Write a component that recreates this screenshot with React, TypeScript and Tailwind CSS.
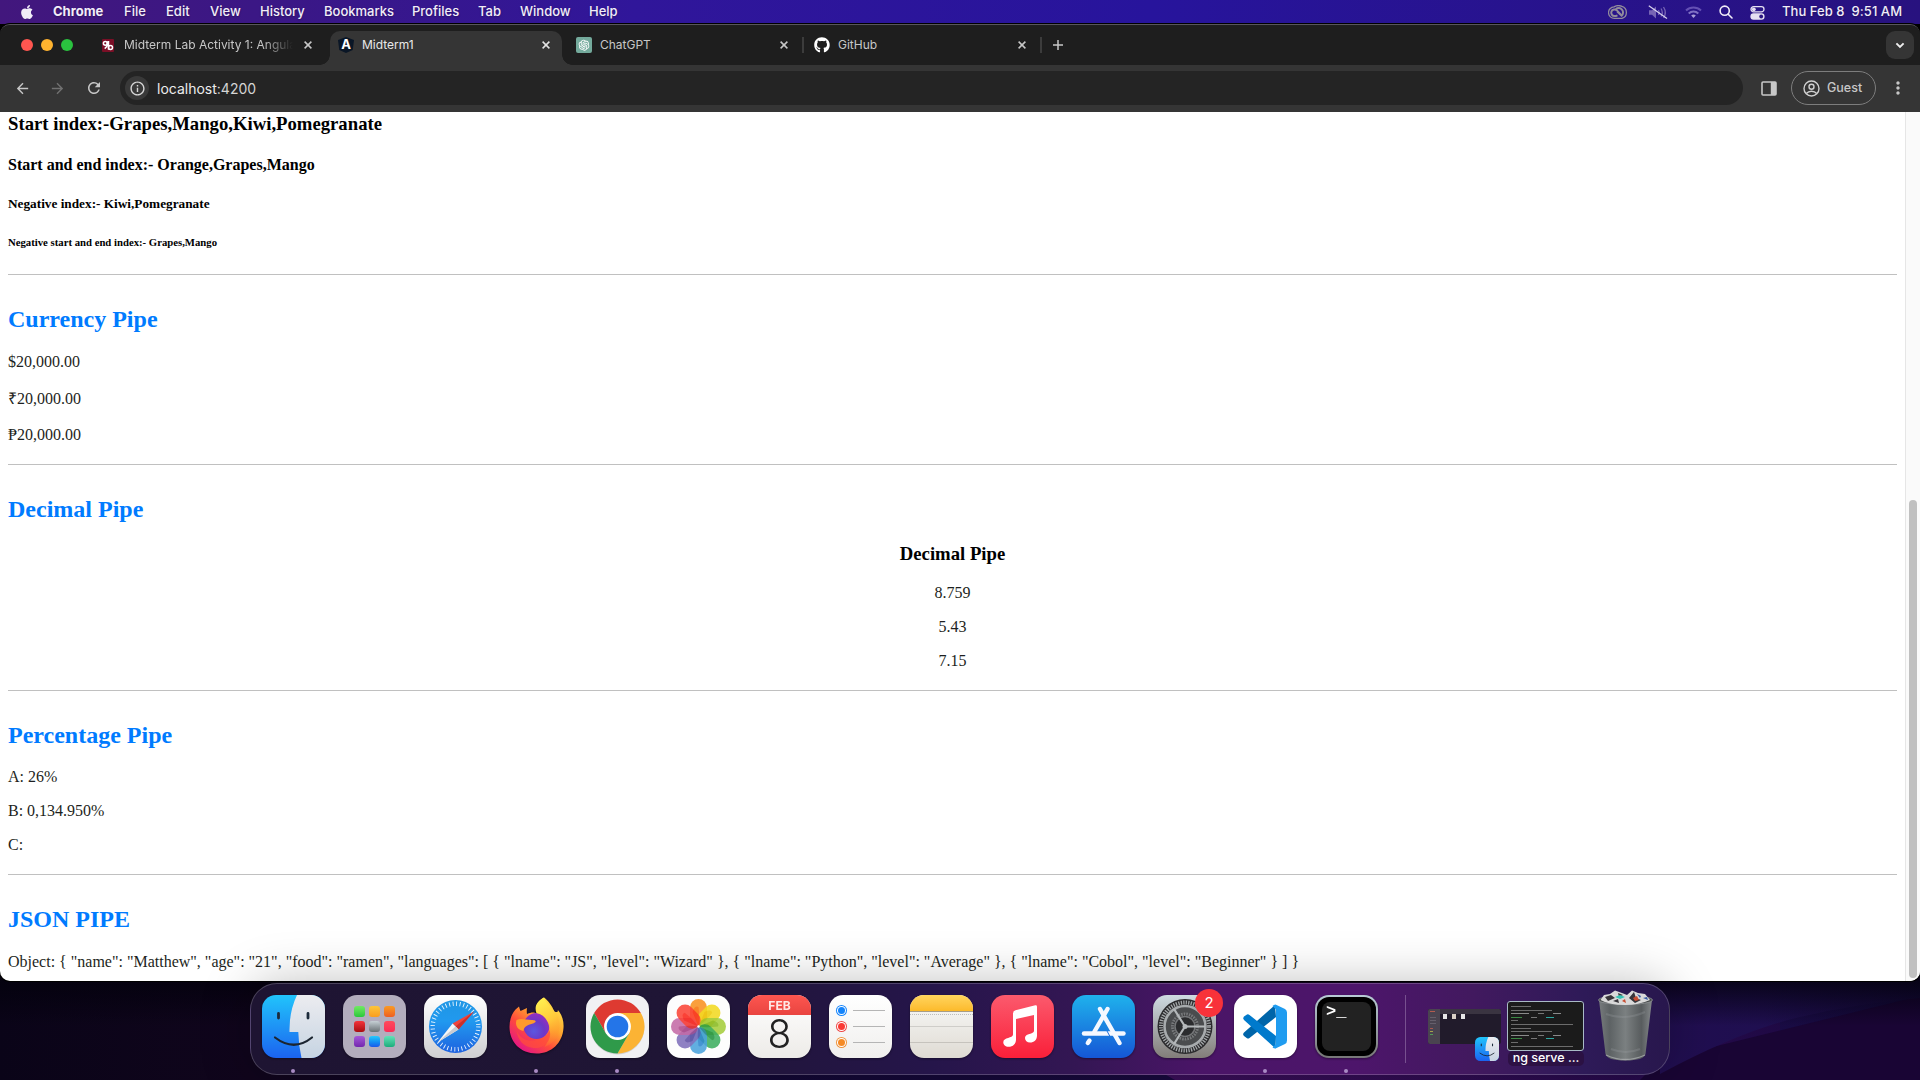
import React from "react";
import { FaApple, FaGithub } from "react-icons/fa";
import { AiOutlineOpenAI } from "react-icons/ai";
import { MdArrowBack, MdArrowForward, MdRefresh, MdMoreVert, MdInfoOutline } from "react-icons/md";

/* ---------- Menu bar ---------- */

const menus: [string, string][] = [
  ["File", "w-[42px]"],
  ["Edit", "w-[44px]"],
  ["View", "w-[50px]"],
  ["History", "w-[64px]"],
  ["Bookmarks", "w-[88px]"],
  ["Profiles", "w-[66px]"],
  ["Tab", "w-[42px]"],
  ["Window", "w-[69px]"],
  ["Help", "w-[40px]"],
];

function CreativeCloud() {
  return (
    <svg width="20" height="15" viewBox="0 0 20 15" fill="none" stroke="#918b9c">
      <path d="M6 1.900C8 .6 11.500 .3 14 1.400a6.300 6.300 0 0 1 0 12H6.500A5.600 5.600 0 0 1 6 1.900Z" strokeWidth="1.300" />
      <path d="M9.500 10.300 8 11H6.600a3.300 3.300 0 1 1 2.300-5.600l4 4.200" strokeWidth="2" />
      <path d="M7.800 4.200a4.200 4.200 0 1 1 5.800 6.500L9.200 6.600" strokeWidth="2" />
    </svg>
  );
}

function Muted() {
  return (
    <svg width="20" height="15" viewBox="0 0 20 15" fill="none">
      <path d="M1 5.200h3l4-3.600v11.800L4 9.800H1Z" fill="#7765b4" />
      <path d="M10.500 5q1.600 2.500 0 5M13 3.500q2.600 4 0 8M15.500 2q3.600 5.500 0 11" stroke="#7765b4" strokeWidth="1.300" />
      <path d="M.8.8 19 13.600" stroke="#d9d4ee" strokeWidth="1.200" />
    </svg>
  );
}

function Wifi() {
  return (
    <svg width="17" height="13" viewBox="0 0 17 13" fill="none" stroke="#6450b4" strokeWidth="2">
      <path d="M1 4.500a11 11 0 0 1 15 0" />
      <path d="M3.700 7.400a7 7 0 0 1 9.600 0" stroke="#7f70c4" />
      <path d="m8.500 12-2.300-2.400a3.400 3.400 0 0 1 4.600 0Z" fill="#a79dd6" stroke="none" />
    </svg>
  );
}

function MenuBar() {
  return (
    <header className="flex h-6 w-full shrink-0 items-center bg-[linear-gradient(90deg,#42177d_0%,#3a1786_15%,#30169a_33%,#27149c_60%,#28127f_100%)] text-[13px] font-medium text-[#f1edf8] [text-shadow:0_1px_2px_rgba(0,0,0,0.3)]">
      <div className="flex w-[53px] justify-center pb-px">
        <FaApple className="h-[16px] w-[16px]" />
      </div>
      <span className="w-[71px] font-bold">Chrome</span>
      {menus.map(([label, width]) => (
        <span key={label} className={width}>
          {label}
        </span>
      ))}
      <div className="ml-auto flex items-center pr-[18px]">
        <span className="flex w-10 justify-start"><CreativeCloud /></span>
        <span className="flex w-[37px] justify-start"><Muted /></span>
        <span className="flex w-[34px] justify-start"><Wifi /></span>
        <span className="flex w-[31px] justify-start">
          <svg width="14" height="14" viewBox="0 0 14 14" fill="none" stroke="#f1edf8" strokeWidth="1.600" strokeLinecap="round">
            <circle cx="5.700" cy="5.700" r="4.600" />
            <path d="m9.200 9.200 3.800 3.800" />
          </svg>
        </span>
        <span className="flex w-[32px] justify-start pt-px">
          <svg width="15" height="14" viewBox="0 0 15 14" fill="none">
            <rect x="1" y=".7" width="13" height="5.200" rx="2.600" stroke="#e5e0f2" strokeWidth="1.300" />
            <circle cx="3.800" cy="3.300" r="1.900" fill="#e5e0f2" />
            <rect x=".4" y="7.300" width="14.200" height="6.400" rx="3.200" fill="#e5e0f2" />
            <circle cx="11.200" cy="10.500" r="1.900" fill="#28137f" />
          </svg>
        </span>
        <span className="w-[120px] tracking-[0.05px] whitespace-pre">Thu Feb 8  9:51 AM</span>
      </div>
    </header>
  );
}

/* ---------- Browser chrome ---------- */

function Cross({ color = "#c7c7c7" }: { color?: string }) {
  return (
    <svg width="8" height="8" viewBox="0 0 8 8" stroke={color} strokeWidth="1.500" className="shrink-0">
      <path d="m.6.600 6.800 6.800M7.400.6.600 7.400" />
    </svg>
  );
}

function TabStrip() {
  return (
    <div className="flex h-10 items-stretch bg-[#1e1e1e] text-[12px] text-[#c7c7c7]">
      <div className="flex w-[101px] items-center gap-2 pl-[21px]">
        <i className="h-3 w-3 rounded-full bg-[#ff5650]" />
        <i className="h-3 w-3 rounded-full bg-[#ffb32f]" />
        <i className="h-3 w-3 rounded-full bg-[#2ac23f]" />
      </div>
      <div className="flex w-[229px] items-center pl-px">
        <span className="flex h-[13px] w-3 items-center justify-center rounded-[1px] bg-[#7a0f26]">
          <svg width="12" height="13" viewBox="0 0 12 13" fill="none" stroke="#fff" strokeWidth="1.500">
            <circle cx="3.300" cy="4.300" r="1.900" />
            <path d="M5.300 2.200v3.300c0 1.800-1 3-2.600 4.200M6.500 2v8.700" />
            <circle cx="8.500" cy="8.500" r="2" />
          </svg>
        </span>
        <span className="ml-[10px] w-[169px] whitespace-nowrap [mask-image:linear-gradient(90deg,#000_82%,transparent_100%)]">
          Midterm Lab Activity 1: Angula
        </span>
        <span className="ml-[11px]"><Cross /></span>
      </div>
      <div className="relative mt-[6px] flex h-[34px] w-[232px] items-center rounded-t-[10px] bg-[#353535] pb-[6px] pl-2 text-[#e9e9e9]">
        <i className="absolute bottom-0 -left-[10px] h-[10px] w-[10px] bg-[radial-gradient(circle_at_0_0,transparent_9.500px,#353535_10px)]" />
        <i className="absolute -right-[10px] bottom-0 h-[10px] w-[10px] bg-[radial-gradient(circle_at_100%_0,transparent_9.500px,#353535_10px)]" />
        <span className="flex h-[16px] w-[16px] items-start justify-center bg-[#0a1626] text-[13px] leading-[14px] font-bold text-white [clip-path:polygon(50%_0,100%_18%,92%_82%,50%_100%,8%_82%,0_18%)]">
          A
        </span>
        <span className="ml-2 w-[180px]">Midterm1</span>
        <Cross color="#e3e3e3" />
      </div>
      <div className="flex w-[242px] items-center pl-[14px]">
        <span className="flex h-4 w-4 items-center justify-center rounded-[2px] bg-[#74aa9c]">
          <AiOutlineOpenAI className="h-[14px] w-[14px] text-white" />
        </span>
        <span className="ml-2 w-[181px]">ChatGPT</span>
        <Cross />
        <i className="ml-[14px] h-4 w-[2px] bg-[#3c3c3c]" />
      </div>
      <div className="flex w-[238px] items-center pl-[10px]">
        <FaGithub className="h-4 w-4 text-white" />
        <span className="ml-2 w-[181px]">GitHub</span>
        <Cross />
        <i className="ml-[14px] h-4 w-[2px] bg-[#3c3c3c]" />
      </div>
      <div className="flex items-center pl-[11px]">
        <svg width="10" height="10" viewBox="0 0 10 10" stroke="#c7c7c7" strokeWidth="1.500">
          <path d="M5 0v10M0 5h10" />
        </svg>
      </div>
      <div className="mt-[6px] mr-[6px] ml-auto flex h-7 w-7 items-center justify-center rounded-[9px] bg-[#353535]">
        <svg width="10" height="7" viewBox="0 0 10 7" fill="none" stroke="#eee" strokeWidth="1.900">
          <path d="m1.400 1.300 3.600 3.600 3.600-3.600" />
        </svg>
      </div>
    </div>
  );
}

function Toolbar() {
  return (
    <div className="flex h-[47px] items-center bg-[#353535] pb-px text-[#c7c7c7]">
      <span className="ml-[11px] flex w-[22px] justify-center"><MdArrowBack className="h-[17px] w-[17px]" /></span>
      <span className="ml-[13px] flex w-[22px] justify-center"><MdArrowForward className="h-[17px] w-[17px] text-[#717171]" /></span>
      <span className="ml-[15px] flex w-[22px] justify-center"><MdRefresh className="h-[18px] w-[18px]" /></span>
      <div className="ml-[15px] flex h-[34px] w-[1623px] items-center rounded-full bg-[#242424] pl-[5px]">
        <span className="flex h-6 w-6 items-center justify-center rounded-full bg-[#393939]">
          <MdInfoOutline className="h-[17px] w-[17px] text-[#d6d6d6]" />
        </span>
        <span className="ml-2 text-[14px] text-[#d5d5d5]">
          <span className="text-[#ececec]">localhost</span>:4200
        </span>
      </div>
      <svg className="ml-[18px]" width="16" height="15" viewBox="0 0 16 15" fill="none">
        <rect x="1" y="1" width="14" height="13" rx="1" stroke="#c7c7c7" strokeWidth="1.600" />
        <path d="M9.800 1H15v13H9.800Z" fill="#c7c7c7" />
      </svg>
      <div className="ml-[14px] flex h-[34px] w-[85px] items-center rounded-full border border-[#7d7d7d] pl-[11px] text-[12.500px]">
        <svg width="17" height="17" viewBox="0 0 17 17" fill="none" stroke="#cfcfcf" strokeWidth="1.400">
          <circle cx="8.500" cy="8.500" r="7.500" />
          <circle cx="8.500" cy="6.800" r="2.500" />
          <path d="M3.300 13.500c2.500-3 7.900-3 10.400 0" />
        </svg>
        <span className="ml-[7px] font-medium">Guest</span>
      </div>
      <MdMoreVert className="ml-[12px] h-5 w-5" />
    </div>
  );
}

/* ---------- Page ---------- */

const H2 = ({ children }: { children: React.ReactNode }) => (
  <h2 className="mt-[31px] text-[24px] leading-[27px] font-bold text-[#007bff]">{children}</h2>
);
const P = ({ mt, children }: { mt: string; children: React.ReactNode }) => (
  <p className={`${mt} text-[16px] leading-[18px] text-[#1d1f21]`}>{children}</p>
);
const Rule = ({ mt }: { mt: string }) => <div className={`${mt} h-px bg-[#c0c0c0]`} />;

function Page() {
  return (
    <div className="flex h-[869px] bg-white">
      <main className="w-[1905px] pr-2 pl-2 font-['Liberation_Serif',serif] whitespace-nowrap text-black">
        <div className="h-px" />
        <h3 className="text-[18.720px] leading-[21px] font-bold">Start index:-Grapes,Mango,Kiwi,Pomegranate</h3>
        <h4 className="mt-[22px] text-[16px] leading-[18px] font-bold">Start and end index:- Orange,Grapes,Mango</h4>
        <h5 className="mt-[22px] text-[13.280px] leading-[15px] font-bold">Negative index:- Kiwi,Pomegranate</h5>
        <h6 className="mt-[25px] text-[10.720px] leading-[12px] font-bold">Negative start and end index:- Grapes,Mango</h6>
        <Rule mt="mt-[26px]" />
        <H2>Currency Pipe</H2>
        <P mt="mt-[20px]">$20,000.00</P>
        <P mt="mt-[19px]">₹20,000.00</P>
        <P mt="mt-[18px]">₱20,000.00</P>
        <Rule mt="mt-[20px]" />
        <H2>Decimal Pipe</H2>
        <div className="text-center">
          <h3 className="mt-[20px] text-[18.720px] leading-[21px] font-bold">Decimal Pipe</h3>
          <P mt="mt-[20px]">8.759</P>
          <P mt="mt-[16px]">5.43</P>
          <P mt="mt-[16px]">7.15</P>
        </div>
        <Rule mt="mt-[20px]" />
        <H2>Percentage Pipe</H2>
        <P mt="mt-[19px]">A: 26%</P>
        <P mt="mt-[16px]">B: 0,134.950%</P>
        <P mt="mt-[16px]">C:</P>
        <Rule mt="mt-[20px]" />
        <H2>JSON PIPE</H2>
        <P mt="mt-[20px]">
          {`Object: { "name": "Matthew", "age": "21", "food": "ramen", "languages": [ { "lname": "JS", "level": "Wizard" }, { "lname": "Python", "level": "Average" }, { "lname": "Cobol", "level": "Beginner" } ] }`}
        </P>
      </main>
      <div className="w-[15px] border-l border-[#e6e6e6] bg-[#fafafa] pt-[388px] pl-[3px]">
        <div className="h-[478px] w-2 rounded-full bg-[#c0c0c0]" />
      </div>
    </div>
  );
}

/* ---------- Dock ---------- */

function FinderFace({ className }: { className: string }) {
  return (
    <svg className={className} viewBox="0 0 63 63">
      <defs>
        <linearGradient id="fb" x2="0" y2="1"><stop stopColor="#21c4fb" /><stop offset="1" stopColor="#1b63f0" /></linearGradient>
        <linearGradient id="fw" x2="0" y2="1"><stop stopColor="#ececf0" /><stop offset="1" stopColor="#c6d4e2" /></linearGradient>
      </defs>
      <rect width="63" height="63" rx="14" fill="url(#fb)" />
      <path d="M35 0H49A14 14 0 0 1 63 14V49A14 14 0 0 1 49 63H39.500Q36.500 50 36.300 37H27.500Q27 17 35 0Z" fill="url(#fw)" />
      <path d="M16.500 18.500v4.500M46 18.500v4.500" stroke="#1c2b3b" strokeWidth="2.800" strokeLinecap="round" />
      <path d="M13 42.500Q32 57 50 42.500" fill="none" stroke="#1c2530" strokeWidth="2.200" strokeLinecap="round" />
    </svg>
  );
}

const pads = [
  "from-[#6fea63] to-[#25c83a]",
  "from-[#fdc53a] to-[#f99d1e]",
  "from-[#f89a24] to-[#ee5d22]",
  "from-[#f5333b] to-[#a90c10]",
  "from-[#c6d0d5] to-[#6a7276]",
  "from-[#ff4a5c] to-[#fb2b57]",
  "from-[#a557d8] to-[#7427ae]",
  "from-[#2cc9fb] to-[#1c58ea]",
  "from-[#5fe2b7] to-[#18ad7c]",
];

function Launchpad() {
  return (
    <div className="grid h-full w-full grid-cols-[repeat(3,11px)] content-center justify-center gap-1 rounded-[14px] bg-[#b3adbd]">
      {pads.map((p) => (
        <i key={p} className={`h-[11px] w-[11px] rounded-[3px] bg-gradient-to-b ${p}`} />
      ))}
    </div>
  );
}

function Safari() {
  return (
    <svg viewBox="0 0 63 63" className="h-full w-full">
      <defs>
        <linearGradient id="sfbg" x2="0" y2="1"><stop stopColor="#fff" /><stop offset="1" stopColor="#cfcfd1" /></linearGradient>
        <linearGradient id="sf" x2="0" y2="1"><stop stopColor="#1f96e4" /><stop offset=".4" stopColor="#2199ef" /><stop offset="1" stopColor="#1e62df" /></linearGradient>
      </defs>
      <rect width="63" height="63" rx="14" fill="url(#sfbg)" />
      <circle cx="31.500" cy="31.500" r="26.500" fill="url(#sf)" />
      <circle cx="31.500" cy="31.500" r="22.800" fill="none" stroke="#fff" strokeWidth="4.400" strokeDasharray=".9 2.681" opacity=".9" />
      <path d="M50 16.500 28.600 28.600 34.500 34.500Z" fill="#f0453c" />
      <path d="M50 16.500 34.500 34.500 31.500 31.500Z" fill="#c9302c" />
      <path d="M13.500 47.500 28.600 28.600 34.500 34.500Z" fill="#f6f6f6" />
      <path d="M13.500 47.500 34.500 34.500 31.500 31.500Z" fill="#c9ccd2" />
    </svg>
  );
}

function Firefox() {
  return (
    <svg viewBox="-3.5 0 63 63" className="h-full w-full">
      <defs>
        <linearGradient id="ffo" x1=".85" y1=".1" x2=".2" y2=".95"><stop stopColor="#ffe14a" /><stop offset=".35" stopColor="#ffa42e" /><stop offset=".65" stopColor="#ff4a3c" /><stop offset="1" stopColor="#e31587" /></linearGradient>
        <linearGradient id="ffy" x1=".3" y1="0" x2=".6" y2="1"><stop stopColor="#fff04f" /><stop offset=".5" stopColor="#ffc93a" /><stop offset="1" stopColor="#ff8228" stopOpacity=".2" /></linearGradient>
        <radialGradient id="ffp" cx=".4" cy=".7" r=".8"><stop stopColor="#5b57e0" /><stop offset=".5" stopColor="#6d37c6" /><stop offset="1" stopColor="#a32bbd" /></radialGradient>
      </defs>
      <path d="M35.500 2.500C40 6 43 10 46 16.500 49 18 50 16 49 14.500 54 20 55.500 27 55 33 54 48 43 58.500 28 58.500 12 58.500 1 47 1 32 1 25 3 19 7 14.500L10.500 11.500Q11 13.500 12 16L18.500 13Q18 16 18.500 19C23 17 26 17 29 19 25 12 30 5 35.500 2.500Z" fill="url(#ffo)" />
      <circle cx="28" cy="31" r="13" fill="url(#ffp)" />
      <path d="M28 18C25 10 30 6 35.500 2.500 38 10 49 16 51 28 52 40 45 49 36 52 43 42 42 31 38 25 35 20 31 19 28 18Z" fill="url(#ffy)" />
      <path d="M8 25C13 23 18 25 23 25 27 25 27.500 26 27 27 25 29 21 29 18 31 16 32 15 34 15 36 10 35 6 31 8 25Z" fill="#ff9a2b" />
      <path d="M8 35C11 44 20 47 28 45 35 44 39 40 41 35 44 45 36 54 25 53 15 52 9 45 8 35Z" fill="#ff4c3d" opacity=".75" />
    </svg>
  );
}

function Chrome() {
  return (
    <svg viewBox="0 0 63 63" className="h-full w-full">
      <rect width="63" height="63" rx="14" fill="#f1f1f3" />
      <circle cx="31.500" cy="32.500" r="27" fill="#00000020" />
      <path d="M31.500 18H54.880A27 27 0 0 1 31.500 58.500L43.200 38.200Z" fill="#fbb334" />
      <path d="M8.120 18A27 27 0 0 1 54.880 18H31.500L19.800 38.200Z" fill="#de3a31" />
      <path d="M8.120 18 19.800 38.200 31.500 45 43.200 38.200 31.500 58.500A27 27 0 0 1 8.120 18Z" fill="#2f9a4a" />
      <circle cx="31.500" cy="31.500" r="13.400" fill="#fff" />
      <circle cx="31.500" cy="31.500" r="10.800" fill="#2475e8" />
    </svg>
  );
}

const petals: [string, number][] = [
  ["#f99222", 0],
  ["#f2da22", 45],
  ["#a5cd3c", 90],
  ["#3fae60", 135],
  ["#4ba3dc", 180],
  ["#7f70bb", 225],
  ["#c46aa6", 270],
  ["#fb4638", 315],
];

function Photos() {
  return (
    <svg viewBox="0 0 63 63" className="h-full w-full">
      <rect width="63" height="63" rx="14" fill="#fdfdfd" />
      {petals.map(([c, a]) => (
        <rect key={a} x="23" y="4" width="17" height="27" rx="8.500" fill={c} opacity=".88" transform={`rotate(${a} 31.500 31.500)`} />
      ))}
      {petals.map(([c, a]) => (
        <path key={a} d="M31.500 31.500 25.500 17Q28 10 31.500 12Q33 22 31.500 31.500Z" fill={c} opacity=".4" className="mix-blend-multiply" transform={`rotate(${a} 31.500 31.500)`} />
      ))}
      <circle cx="31.500" cy="31.500" r="1.200" fill="#fff" />
    </svg>
  );
}

function Calendar() {
  return (
    <div className="flex h-full w-full flex-col overflow-hidden rounded-[14px] bg-gradient-to-b from-white to-[#edebe8] text-center">
      <div className="h-5 bg-gradient-to-b from-[#fd5650] to-[#e94440] text-[12px] leading-[21px] font-bold text-[#ffe8e6]">FEB</div>
      <div className="text-[39px] leading-[38px] font-light text-[#222]">8</div>
    </div>
  );
}

function Reminders() {
  return (
    <div className="flex h-full w-full flex-col justify-center gap-[5px] rounded-[14px] bg-gradient-to-b from-white to-[#f0efed] pl-[7px]">
      {["bg-[#1484fb] ring-[#1484fb]", "bg-[#fa3a35] ring-[#ee4a48]", "bg-[#f58a25] ring-[#ee933e]"].map((c) => (
        <div key={c} className="flex h-[11px] items-center">
          <span className={`ml-[2px] h-[7px] w-[7px] rounded-full ring-1 ring-offset-[1px] ring-offset-white ${c}`} />
          <i className="ml-[8px] h-px w-[32px] bg-[#b5b5b5]" />
        </div>
      ))}
    </div>
  );
}

function Notes() {
  return (
    <div className="flex h-full w-full flex-col overflow-hidden rounded-[14px] bg-gradient-to-b from-[#fafafa] to-[#dfdbd3]">
      <div className="h-[17px] border-b border-[#a79c85] bg-gradient-to-b from-[#ffd55c] to-[#fcba29]" />
      <i className="mt-[2px] border-t border-dotted border-[#bdbdbd]" />
      <i className="mt-[11px] h-px bg-[#cfcdc9]" />
      <i className="mt-[15px] h-px bg-[#c6c3bd]" />
    </div>
  );
}

function Music() {
  return (
    <svg viewBox="0 0 63 63" className="h-full w-full">
      <defs><linearGradient id="mu" x2="0" y2="1"><stop stopColor="#fb5a6d" /><stop offset="1" stopColor="#fa1f39" /></linearGradient></defs>
      <rect width="63" height="63" rx="14" fill="url(#mu)" />
      <path d="M24.500 15.200 44.300 10.300Q46 10 46 11.700V40.500C46 45 43 47.500 39 47.500 36 47.500 34 45.500 34 43 34 38 43 39.500 43 36V20L25 24V44.500C25 49 22 51.800 17.500 51.800 14.500 51.800 12.300 50 12.300 47.300 12.300 42 22 43.500 22 39.500V18.500Q22 15.700 24.500 15.200Z" fill="#fff" />
    </svg>
  );
}

function AppStore() {
  return (
    <svg viewBox="0 0 63 63" className="h-full w-full">
      <defs><linearGradient id="as" x2="0" y2="1"><stop stopColor="#1fb2ec" /><stop offset="1" stopColor="#1556d6" /></linearGradient></defs>
      <rect width="63" height="63" rx="14" fill="url(#as)" />
      <g stroke="#f4f8ff" strokeWidth="4.400" strokeLinecap="round">
        <path d="M12 38.500H51.500" />
        <path d="M28 14 47.500 48" />
        <path d="M35.500 14 22.500 36.500" />
        <path d="M17.500 45.500 15.800 48" />
      </g>
      <path d="M35 36 38 41.500" stroke="#1d6fde" strokeWidth="1" />
    </svg>
  );
}

function Settings() {
  return (
    <svg viewBox="0 0 63 63" className="h-full w-full">
      <defs><linearGradient id="se" x2="0" y2="1"><stop stopColor="#cfdbe2" /><stop offset="1" stopColor="#827d79" /></linearGradient></defs>
      <rect width="63" height="63" rx="14" fill="url(#se)" />
      <circle cx="32" cy="31.500" r="27.500" fill="#2b2b2d" />
      <circle cx="32" cy="31.500" r="24" fill="none" stroke="#a3a7a9" strokeWidth="4" strokeDasharray="1.300 1.213" />
      <circle cx="32" cy="31.500" r="20.500" fill="#4a4c4e" stroke="#a7abad" strokeWidth="2.600" />
      <circle cx="32" cy="31.500" r="12.500" fill="#3a3b3d" stroke="#77797b" strokeWidth="3" strokeDasharray="1.600 1" />
      <circle cx="32" cy="31.500" r="10" fill="#2b2c2e" stroke="#747678" strokeWidth="1.500" />
      <path d="M32 31.500H52M32 31.500 21 14M32 31.500 21 49" stroke="#b4b8ba" strokeWidth="2.200" />
      <circle cx="32" cy="31.500" r="2.500" fill="#b4b8ba" />
    </svg>
  );
}

function Code() {
  return (
    <svg viewBox="0 0 63 63" className="h-full w-full">
      <rect width="63" height="63" rx="14" fill="#fff" />
      <path d="M41 10 10 37.500Q8.200 39.300 10 41L13 43.300Q14.300 44 15.500 43L42 22Z" fill="#0065a9" />
      <path d="M41.500 53.500 10 25Q8.200 23.300 10 21.500L13 19.500Q14.300 19 15.500 20L42 41Z" fill="#007acc" />
      <path d="M41.500 9.500 51 14Q53 15 53 17.500V45.500Q53 48 51 49L41.500 53.600Q39.800 53.500 38.500 52.500L42 49V14.500L38.500 11Q39.800 9.800 41.500 9.500Z" fill="#1f9cf0" />
    </svg>
  );
}

function Terminal() {
  return (
    <div className="h-full w-full rounded-[14px] bg-gradient-to-b from-[#b8cbd6] to-[#777] p-[2px]">
      <div className="h-full w-full rounded-[12px] bg-black p-[5px]">
        <div className="h-full w-full rounded-[8px] bg-[#222] pt-[1px] pl-[4px] font-['Liberation_Mono',monospace] text-[17px] leading-[18px] font-bold text-white">
          &gt;_
        </div>
      </div>
    </div>
  );
}

function FinderWindow() {
  return (
    <div className="relative mt-[14px] h-[35px] w-[73px] shrink-0">
      <div className="flex h-full w-full overflow-hidden rounded-[2px] bg-[#211b2b]">
        <div className="flex w-3 flex-col gap-[2px] bg-[#4a4450] pt-[2px] pl-[2px]">
          <i className="mb-[3px] h-px w-[5px] bg-[#b35b4f]" />
          <i className="h-px w-[6px] bg-[#66606c]" />
          <i className="h-px w-[6px] bg-[#66606c]" />
          <i className="h-px w-[6px] bg-[#66606c]" />
          <i className="mt-[2px] h-px w-[3px] bg-[#a9584f]" />
          <i className="h-px w-[3px] bg-[#a8a04d]" />
          <i className="h-px w-[3px] bg-[#559a5a]" />
        </div>
        <div className="flex-1">
          <div className="h-[5px] bg-[#3a3441]" />
          <div className="flex gap-[5px] pl-[3px]">
            <i className="h-[5px] w-[4px] bg-[#e6e6e6]" />
            <i className="h-[5px] w-[4px] bg-[#d8cfc6]" />
            <i className="h-[5px] w-[4px] bg-[#e6e6e6]" />
          </div>
        </div>
      </div>
      <FinderFace className="absolute top-[28px] left-[47px] h-6 w-6" />
    </div>
  );
}

const logRows = ["w-[20px]", "w-[41px]", "t", "c", "w-[7px]", "w-[62px]", "w-[20px]", "w-[41px]", "t", "c", "w-[7px]", "w-[62px]"];

function TerminalWindow() {
  return (
    <div className="relative mt-[6px] ml-[6px] h-[50px] w-[77px] shrink-0">
      <div className="flex h-full w-full flex-col gap-[2.600px] overflow-hidden rounded-[3px] border-[1.500px] border-[#a9bac6] bg-[#1b1b1b] pt-1 pl-[3px]">
        {logRows.map((row, i) =>
          row === "t" || row === "c" ? (
            <div key={i} className="flex gap-[9px]">
              <i className={row === "t" ? "h-px w-[18px] bg-[#8a8a8a]" : "h-px w-[11px] bg-[#3c8a45]"} />
              <i className="h-px w-[6px] bg-[#777]" />
              <i className={row === "t" ? "h-px w-[8px] bg-[#8a8a8a]" : "h-px w-[8px] bg-[#2fa6a0]"} />
            </div>
          ) : (
            <i key={i} className={`h-px shrink-0 bg-[#6c6c6c] ${row}`} />
          )
        )}
      </div>
      <span className="absolute top-[50px] left-[1px] h-[15px] w-[76px] rounded-[5px] bg-[#2a0f3e]/80 text-center text-[12.500px] leading-[13px] font-medium whitespace-nowrap text-white">
        ng serve ...
      </span>
    </div>
  );
}

function Trash() {
  return (
    <svg className="mt-[-6px] ml-[13px] shrink-0" width="57" height="73" viewBox="0 0 57 73">
      <defs>
        <linearGradient id="tr" x2="1"><stop stopColor="#777b7d" /><stop offset=".2" stopColor="#5d6264" /><stop offset=".5" stopColor="#7b8081" /><stop offset=".8" stopColor="#585c5e" /><stop offset="1" stopColor="#85898b" /></linearGradient>
      </defs>
      <path d="M2 11Q28 20 55 11L48.500 65Q47 71.500 28.500 71.500T8.500 65Z" fill="url(#tr)" />
      <ellipse cx="28.500" cy="11" rx="27" ry="4.500" fill="#444849" stroke="#9da1a3" strokeWidth=".7" />
      <path d="M3.500 11 7 6 13 5 18 1.500 25 4 30 6 35 1.500 41 4 48 5 53 11Q42 16 28 16 12 16 3.500 11Z" fill="#d9d9d9" />
      <path d="m8 8 6-2 4 3-7 3ZM21 4l5 2-4 2ZM32 9l5-6 2 6 5 2-6 3ZM16 12l5-2 1 4Z" fill="#38353a" />
      <path d="m18 8 5-2 5 2-5 2Z" fill="#35c5b5" />
      <path d="m36 9 4-2 2 4-4 1ZM25 12l3-2 1 4Z" fill="#c94d31" />
      <path d="m40 5 4 2-1 2ZM46 9l4-1 1 3Z" fill="#3558a4" />
      <path d="M9 25Q28 32 48 23M14 60Q29 66 43 60" fill="none" stroke="#a1a5a6" strokeWidth="2" opacity=".25" />
      <path d="M9 66Q28 75 48 66" fill="none" stroke="#b0b4b5" strokeWidth="1.300" opacity=".7" />
    </svg>
  );
}

const apps: { name: string; icon: React.ReactNode; running?: boolean; badge?: string }[] = [
  { name: "finder", icon: <FinderFace className="h-full w-full" />, running: true },
  { name: "launchpad", icon: <Launchpad /> },
  { name: "safari", icon: <Safari /> },
  { name: "firefox", icon: <Firefox />, running: true },
  { name: "chrome", icon: <Chrome />, running: true },
  { name: "photos", icon: <Photos /> },
  { name: "calendar", icon: <Calendar /> },
  { name: "reminders", icon: <Reminders /> },
  { name: "notes", icon: <Notes /> },
  { name: "music", icon: <Music /> },
  { name: "appstore", icon: <AppStore /> },
  { name: "settings", icon: <Settings />, badge: "2" },
  { name: "code", icon: <Code />, running: true },
  { name: "terminal", icon: <Terminal />, running: true },
];

function Dock() {
  return (
    <nav className="relative mt-[2px] ml-[250px] flex h-[92px] w-[1420px] items-start rounded-[27px] border border-white/20 bg-[linear-gradient(90deg,#1e1432_0%,#1f1535_30%,#25154a_48%,#331653_58%,#4a1567_67%,#4d156b_78%,#42195f_86%,#2e1a58_94%,#28174d_100%)] pt-[11px] pl-[11px] shadow-[0_0_50px_rgba(0,0,0,0.26)]">
      <div className="flex gap-[18px]">
        {apps.map((app) => (
          <div key={app.name} className="relative flex w-[63px] flex-col items-center">
            <div className="h-[63px] w-[63px] drop-shadow-[0_1px_1px_rgba(0,0,0,0.4)]">{app.icon}</div>
            {app.running && <i className="mt-[11px] mr-px h-1 w-1 rounded-full bg-[#a98bc4]" />}
            {app.badge && (
              <span className="absolute -top-[6px] left-[42px] flex h-7 w-7 items-center justify-center rounded-full bg-[#f8323a] text-[15px] text-white">
                {app.badge}
              </span>
            )}
          </div>
        ))}
      </div>
      <i className="ml-[27px] h-[68px] w-px bg-[#77508f]" />
      <div className="w-[22px]" />
      <FinderWindow />
      <TerminalWindow />
      <Trash />
    </nav>
  );
}

function Wallpaper() {
  return (
    <svg className="absolute top-[960px] left-0" width="1920" height="120" viewBox="0 0 1920 120">
      <defs>
        <linearGradient id="wp" x2="1">
          <stop stopColor="#0a0418" />
          <stop offset=".13" stopColor="#10051c" />
          <stop offset=".3" stopColor="#100630" />
          <stop offset=".6" stopColor="#180a3e" />
          <stop offset=".85" stopColor="#1d0c4c" />
          <stop offset="1" stopColor="#150a3c" />
        </linearGradient>
        <linearGradient id="wm" x2="1">
          <stop stopColor="#4c1168" />
          <stop offset="1" stopColor="#220845" />
        </linearGradient>
        <linearGradient id="wr" x2="1">
          <stop stopColor="#210e50" />
          <stop offset=".4" stopColor="#1f0f50" />
          <stop offset="1" stopColor="#160a3c" />
        </linearGradient>
        <linearGradient id="ws" x2="0" y2="1">
          <stop offset=".17" stopColor="#03010c" stopOpacity=".8" />
          <stop offset=".55" stopColor="#03010c" stopOpacity="0" />
        </linearGradient>
      </defs>
      <rect width="1920" height="120" fill="url(#wp)" />
      <path d="M1140 100 1175 120H1640Q1740 95 1780 80V20H1140Z" fill="url(#wm)" opacity=".7" />
      <path d="M1640 120 1660 100 1920 36V120Z" fill="#190534" />
      <path d="M1660 20H1920V38Q1860 43 1800 57T1660 114Z" fill="url(#wr)" />
      <rect width="1920" height="120" fill="url(#ws)" />
    </svg>
  );
}

export default function App() {
  return (
    <div className="relative h-[1080px] w-[1920px] overflow-hidden bg-black font-['Inter','Liberation_Sans',sans-serif]">
      <Wallpaper />
      <div className="relative flex h-full flex-col">
        <MenuBar />
        <div className="h-[957px] w-full shrink-0 overflow-hidden rounded-[10px] border-t border-[#58565c] bg-[#1e1e1e] shadow-[0_0_0_1px_#000]">
          <TabStrip />
          <Toolbar />
          <Page />
        </div>
        <Dock />
      </div>
    </div>
  );
}
